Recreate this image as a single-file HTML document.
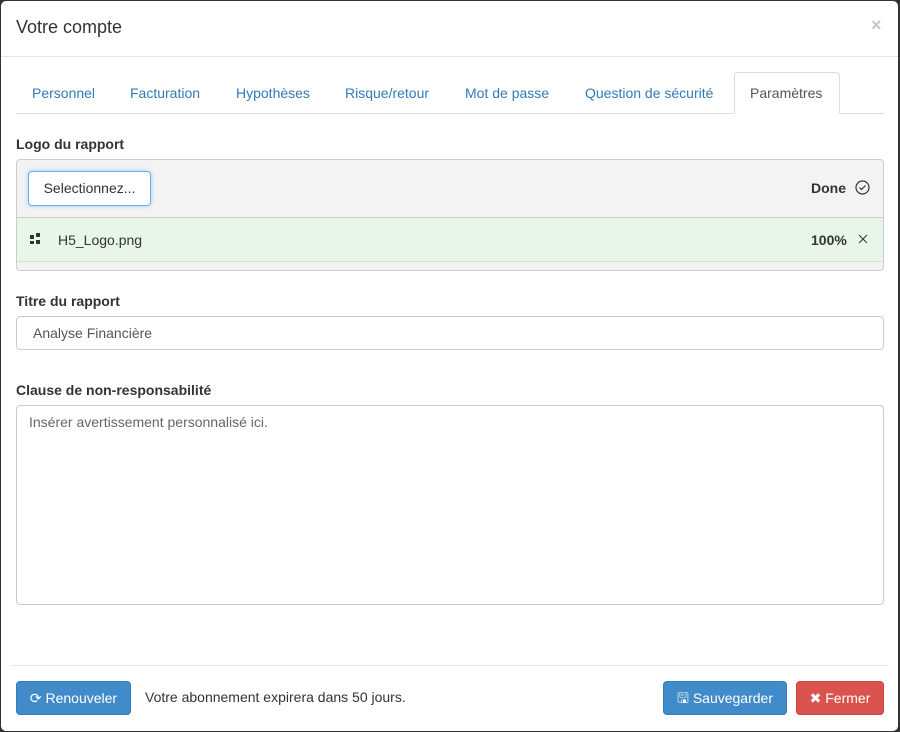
<!DOCTYPE html>
<html><head><meta charset="utf-8"><style>
*{box-sizing:border-box;margin:0;padding:0}
body{width:900px;height:732px;background:#333;font-family:"Liberation Sans",sans-serif;font-size:14px;color:#333;position:relative;overflow:hidden}
.m{position:absolute;left:1px;top:1px;width:897px;height:730px;background:#fff;border-radius:5px}
.a{position:absolute;white-space:nowrap}
.tab{position:absolute;top:85px;color:#337ab7}
.lbl{font-weight:bold;font-size:14px}
.btn{position:absolute;top:681px;height:34px;border-radius:4px;color:#fff;font-size:14px;line-height:32px;text-align:center}
</style></head><body>
<div class="m"></div>
<div class="a" style="left:16px;top:17px;font-size:18px">Votre compte</div>
<div class="a" style="left:871px;top:15px;font-size:18px;color:#c8c8c8;font-weight:bold">×</div>
<div class="a" style="left:1px;top:56px;width:897px;height:1px;background:#e5e5e5"></div>
<div class="a" style="left:16px;top:113px;width:868px;height:1px;background:#ddd"></div>
<div class="a" style="left:734px;top:72px;width:106px;height:42px;background:#fff;border:1px solid #ddd;border-bottom-color:#fff;border-radius:4px 4px 0 0"></div>
<div class="tab" style="left:32px">Personnel</div>
<div class="tab" style="left:130px">Facturation</div>
<div class="tab" style="left:236px">Hypothèses</div>
<div class="tab" style="left:345px">Risque/retour</div>
<div class="tab" style="left:465px">Mot de passe</div>
<div class="tab" style="left:585px">Question de sécurité</div>
<div class="tab" style="left:750px;color:#555">Paramètres</div>
<div class="a lbl" style="left:16px;top:136px">Logo du rapport</div>
<div class="a" style="left:16px;top:159px;width:868px;height:112px;background:#f3f3f3;border:1px solid #ccc;border-radius:4px;overflow:hidden">
 <div class="a" style="left:0;top:57px;width:868px;height:45px;background:#e8f6e9;border-top:1px solid #ccc;border-bottom:1px solid #ddd"></div>
</div>
<div class="a" style="left:28px;top:171px;width:123px;height:35px;background:#fff;border:1px solid #66afe9;border-radius:4px;box-shadow:0 0 5px rgba(102,175,233,.6);line-height:33px;text-align:center">Selectionnez...</div>
<div class="a" style="left:811px;top:180px;font-weight:bold">Done</div>
<svg class="a" style="left:855px;top:180px" width="15" height="15" viewBox="0 0 15 15"><circle cx="7.5" cy="7.5" r="6.5" fill="none" stroke="#333" stroke-width="1.2"/><path d="M4.5 7.5l2 2 4-4" fill="none" stroke="#333" stroke-width="1.2"/></svg>
<div class="a" style="left:30px;top:235px;width:4px;height:4px;background:#333"></div>
<div class="a" style="left:36px;top:233px;width:4px;height:4px;background:#333"></div>
<div class="a" style="left:36px;top:240px;width:4px;height:4px;background:#333"></div>
<div class="a" style="left:30px;top:241px;width:4px;height:3px;background:#333"></div>
<div class="a" style="left:58px;top:232px">H5_Logo.png</div>
<div class="a" style="left:811px;top:232px;font-weight:bold">100%</div>
<svg class="a" style="left:858px;top:234px" width="10" height="10" viewBox="0 0 10 10"><path d="M1 1l8 8M9 1l-8 8" stroke="#333" stroke-width="1"/></svg>
<div class="a lbl" style="left:16px;top:293px">Titre du rapport</div>
<div class="a" style="left:16px;top:316px;width:868px;height:34px;border:1px solid #ccc;border-radius:4px;padding:8px 16px;color:#555">Analyse Financière</div>
<div class="a lbl" style="left:16px;top:382px">Clause de non-responsabilité</div>
<div class="a" style="left:16px;top:405px;width:868px;height:200px;border:1px solid #ccc;border-radius:4px;padding:8px 12px;color:#666">Insérer avertissement personnalisé ici.</div>
<div class="a" style="left:11px;top:665px;width:878px;height:1px;background:#e5e5e5"></div>
<div class="btn" style="left:16px;width:115px;background:#428bca;border:1px solid #357ebd">⟳ Renouveler</div>
<div class="a" style="left:145px;top:689px">Votre abonnement expirera dans 50 jours.</div>
<div class="btn" style="left:663px;width:124px;background:#428bca;border:1px solid #357ebd">🖫 Sauvegarder</div>
<div class="btn" style="left:796px;width:88px;background:#d9534f;border:1px solid #d43f3a">✖ Fermer</div>
</body></html>
